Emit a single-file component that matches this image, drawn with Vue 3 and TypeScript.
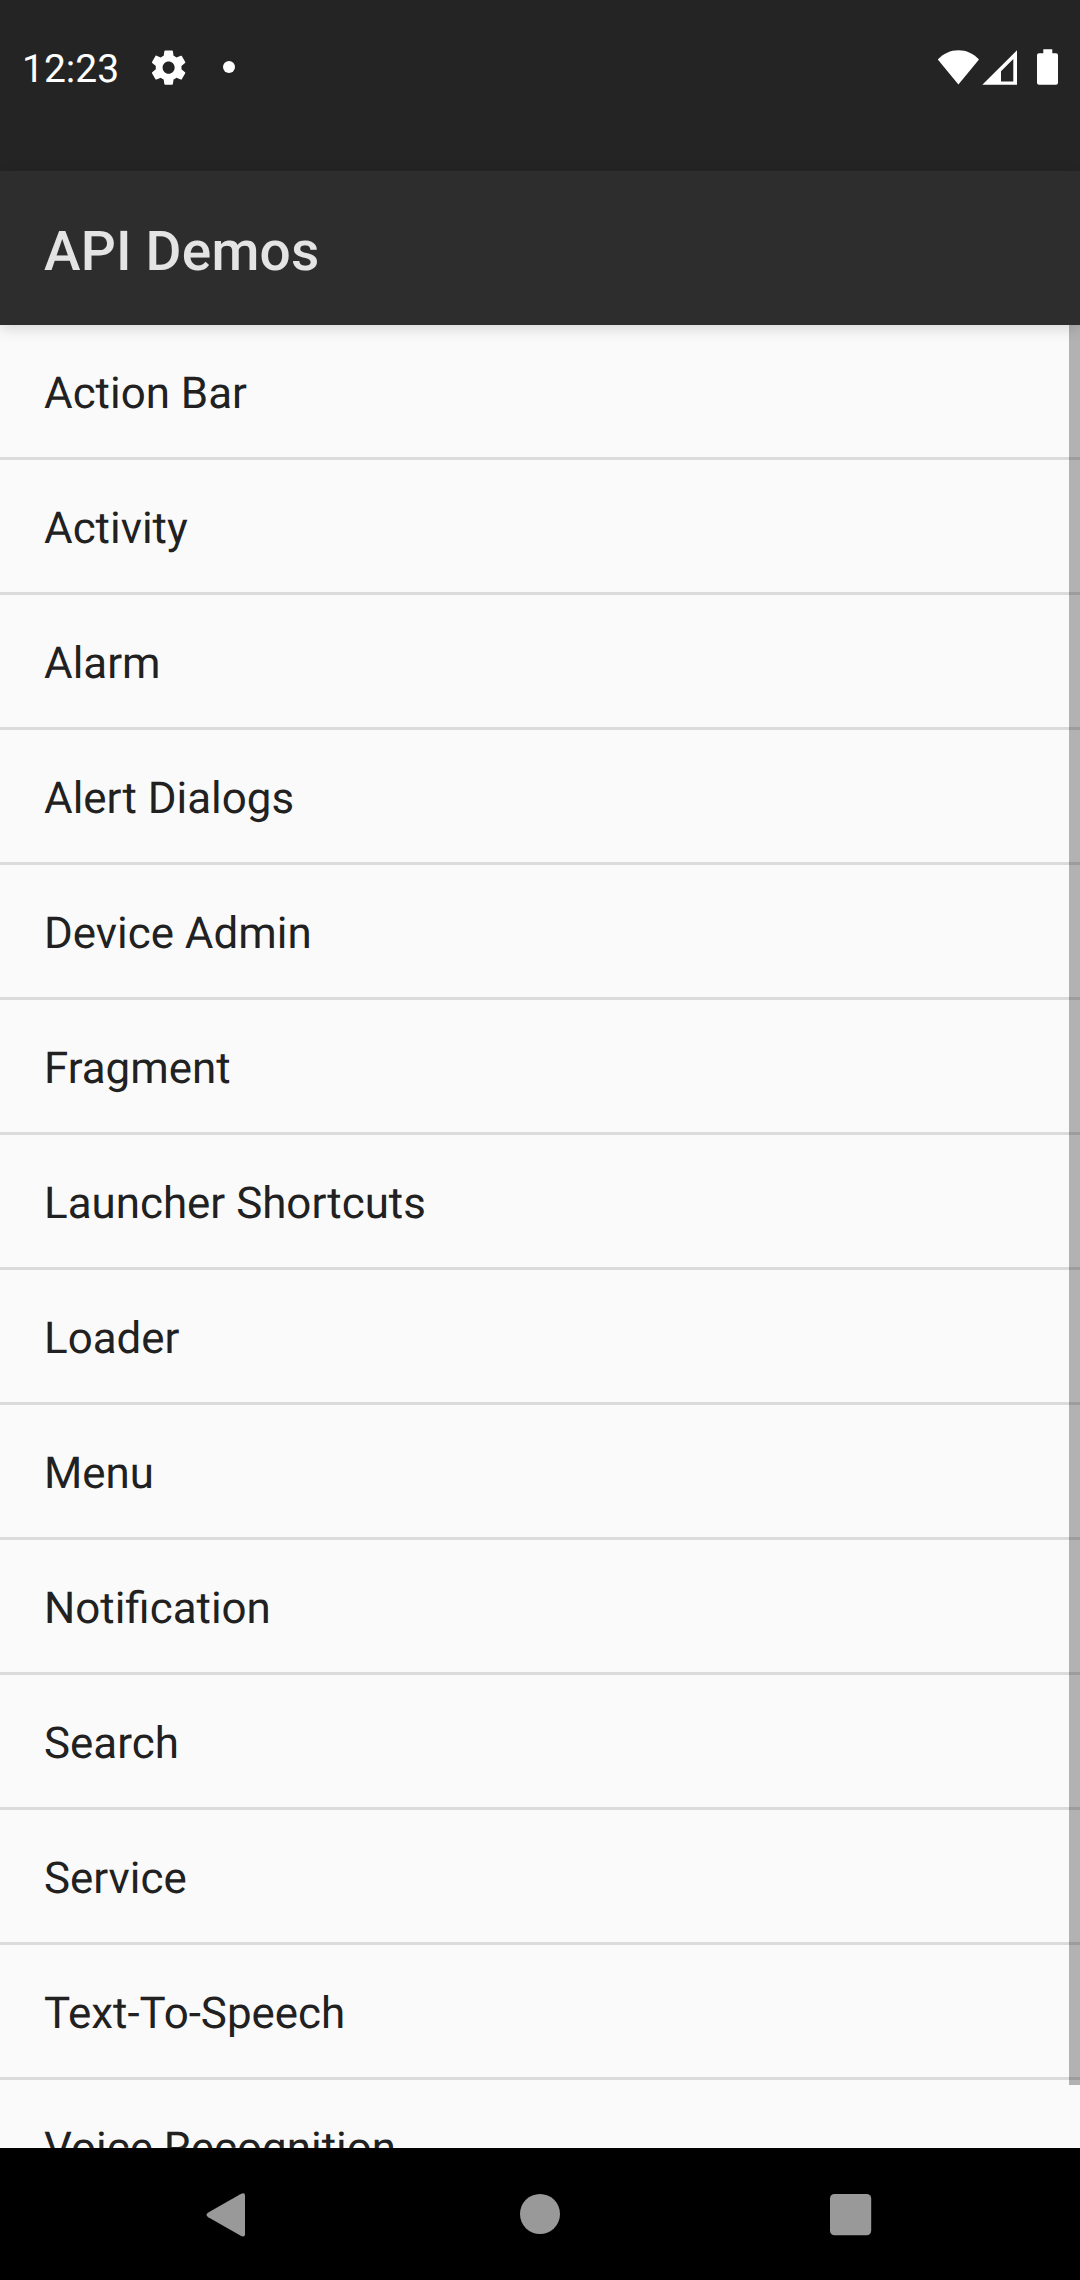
<script setup lang="ts">
const title: string = 'API Demos'
const time: string = '12:23'
const items: string[] = [
  'Action Bar',
  'Activity',
  'Alarm',
  'Alert Dialogs',
  'Device Admin',
  'Fragment',
  'Launcher Shortcuts',
  'Loader',
  'Menu',
  'Notification',
  'Search',
  'Service',
  'Text-To-Speech',
  'Voice Recognition',
]
</script>

<template>
  <div class="screen">
    <header class="status">
      <span class="time">{{ time }}</span>
      <svg class="gear" viewBox="0 0 24 24">
        <path d="M19.43 12.98c.04-.32.07-.64.07-.98s-.03-.66-.07-.98l2.11-1.65c.19-.15.24-.42.12-.64l-2-3.46c-.12-.22-.39-.3-.61-.22l-2.49 1c-.52-.4-1.08-.73-1.69-.98l-.38-2.65C14.46 2.18 14.25 2 14 2h-4c-.25 0-.46.18-.49.42l-.38 2.65c-.61.25-1.17.59-1.69.98l-2.49-1c-.23-.09-.49 0-.61.22l-2 3.46c-.13.22-.07.49.12.64l2.11 1.65c-.04.32-.07.65-.07.98s.03.66.07.98l-2.11 1.65c-.19.15-.24.42-.12.64l2 3.46c.12.22.39.3.61.22l2.49-1c.52.4 1.08.73 1.69.98l.38 2.65c.03.24.24.42.49.42h4c.25 0 .46-.18.49-.42l.38-2.65c.61-.25 1.17-.59 1.69-.98l2.49 1c.23.09.49 0 .61-.22l2-3.46c.12-.22.07-.49-.12-.64l-2.11-1.65zM12 15.5c-1.93 0-3.5-1.57-3.5-3.5s1.57-3.5 3.5-3.5 3.5 1.57 3.5 3.5-1.57 3.5-3.5 3.5z" />
      </svg>
      <span class="dot"></span>
      <svg class="system" width="124" height="40" viewBox="0 0 124 40">
        <path d="M1.8 12.6C7.2 6.6 14.6 3.3 22.4 3.3S37.600 6.600 43 12.600L22.400 37.400Z" />
        <path fill-rule="evenodd" d="M46.300 37.700L81 3.200V37.700ZM65 24.300V34.400H77.300V12Z" />
        <path d="M107.300 2.300h9v4h3.700a2 2 0 0 1 2 2v27.400a2 2 0 0 1-2 2h-17a2 2 0 0 1-2-2V8.300a2 2 0 0 1 2-2h4.300z" />
      </svg>
    </header>
    <div class="appbar">
      <h1>{{ title }}</h1>
    </div>
    <main class="content">
      <ul>
        <li v-for="item in items" :key="item">{{ item }}</li>
      </ul>
      <div class="scrollbar"></div>
    </main>
    <nav class="nav">
      <svg class="back" width="44" height="48" viewBox="0 0 44 48">
        <path d="M36.300 3.200Q41 .6 41 4.600V43.200Q41 47.200 36.300 44.600L4.300 26.200Q.6 23.900 4.300 21.600Z" />
      </svg>
      <svg class="home" width="44" height="44" viewBox="0 0 44 44"><circle cx="22" cy="22" r="20" /></svg>
      <svg class="recent" width="44" height="44" viewBox="0 0 44 44"><rect x="2" y="2" width="41.200" height="41.300" rx="4.500" /></svg>
    </nav>
  </div>
</template>

<style>
body {
  margin: 0;
}
</style>

<style scoped>
.screen {
  display: flex;
  flex-direction: column;
  width: 1080px;
  height: 2280px;
  overflow: hidden;
  background: #fafafa;
  font-family: Roboto, sans-serif;
  text-rendering: geometricPrecision;
}
.status {
  display: flex;
  align-items: flex-start;
  flex: none;
  height: 171px;
  background: #242424;
  color: #fff;
}
.status svg {
  fill: #fff;
  flex: none;
}
.time {
  width: 124px;
  margin: 46px 0 0 22px;
  font-size: 39px;
  line-height: 46px;
  white-space: nowrap;
}
.gear {
  width: 41.250px;
  height: 41.250px;
  margin: 46.700px 0 0 1.700px;
}
.dot {
  width: 12px;
  height: 12px;
  margin: 61px 0 0 34px;
  border-radius: 50%;
  background: #fff;
}
.system {
  margin: 47px 20px 0 auto;
}
.appbar {
  position: relative;
  z-index: 1;
  display: flex;
  align-items: center;
  flex: none;
  height: 154px;
  box-sizing: border-box;
  padding: 7px 44px 0;
  background: #2d2d2d;
  box-shadow: 0 4px 14px rgba(0, 0, 0, 0.14);
}
h1 {
  margin: 0;
  color: #e4e4e4;
  font-size: 55px;
  font-weight: 500;
  line-height: 64px;
  letter-spacing: 0.2px;
}
.content {
  position: relative;
  flex: 1;
  min-height: 0;
  overflow: hidden;
}
ul {
  margin: 0;
  padding: 0;
  list-style: none;
}
li {
  display: flex;
  align-items: center;
  height: 135px;
  box-sizing: border-box;
  padding: 4px 44px 0;
  border-bottom: 3px solid #dbdbdb;
  color: #212121;
  font-size: 43.900px;
  line-height: 52px;
}
.scrollbar {
  position: absolute;
  top: 0;
  right: 0;
  width: 11px;
  height: 1760px;
  background: rgba(0, 0, 0, 0.285);
}
.nav {
  display: flex;
  align-items: flex-start;
  flex: none;
  height: 132px;
  background: #000;
}
.nav svg {
  flex: none;
  fill: #999;
}
.back {
  margin: 42.500px 0 0 204px;
}
.home {
  margin: 44px 0 0 270px;
}
.recent {
  margin: 44px 0 0 266px;
}
</style>
